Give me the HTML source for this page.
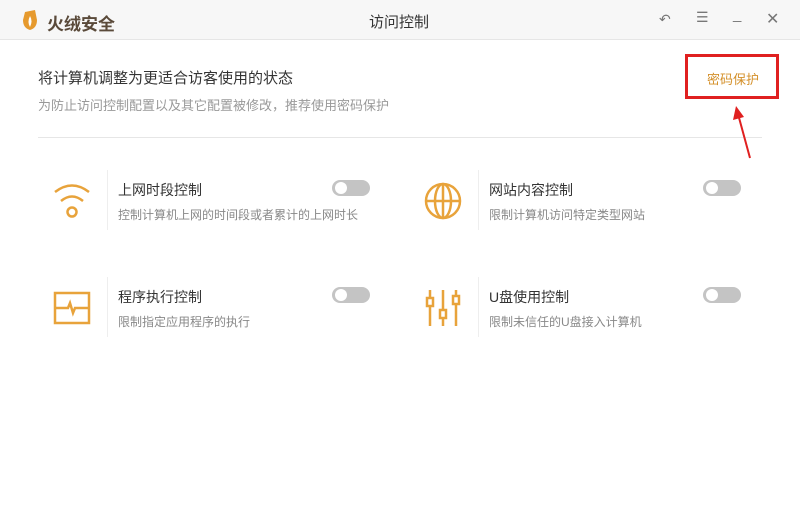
<!DOCTYPE html><html><head><meta charset="utf-8"><style>
*{margin:0;padding:0;box-sizing:border-box}
body{width:800px;height:526px;background:#fff;font-family:"Liberation Sans","Noto Sans CJK SC",sans-serif;position:relative;overflow:hidden}
.a{position:absolute;white-space:nowrap}
.tb{position:absolute;left:0;top:0;width:800px;height:40px;background:#f7f7f7;border-bottom:1px solid #e6e6e6}
.t{font-size:14px;color:#333}
.d{font-size:12px;color:#888}
.tg{position:absolute;width:38px;height:16px;border-radius:8px;background:#c4c4c4}
.tg:after{content:"";position:absolute;left:3px;top:2px;width:12px;height:12px;border-radius:6px;background:#fff}
.v{position:absolute;width:1px;height:60px;background:#eee}
</style></head><body>
<div class="tb"></div>
<svg class="a" style="left:22px;top:10px" width="16" height="20" viewBox="0 0 16 20"><path d="M3 2 L13 0 L15 10 Q15 18 8 20 Q1 18 1 10 Z" fill="#e69a2e"/><path d="M8 6 Q11 11 8 17 Q5 12 8 6Z" fill="#fff"/></svg>
<div class="a" style="left:47px;top:10px;font-size:17px;font-weight:bold;color:#5a4a3a">火绒安全</div>
<div class="a" style="left:369px;top:11px;font-size:15px;color:#333">访问控制</div>
<div class="a" style="left:659px;top:11px;font-size:14px;color:#777">↶</div>
<div class="a" style="left:696px;top:9px;font-size:14px;color:#777">☰</div>
<div class="a" style="left:733px;top:6px;font-size:15px;color:#777">_</div>
<div class="a" style="left:766px;top:9px;font-size:16px;color:#777">✕</div>
<div class="a" style="left:38px;top:67px;font-size:15px;color:#333">将计算机调整为更适合访客使用的状态</div>
<div class="a d" style="left:38px;top:95px;font-size:13px;color:#999">为防止访问控制配置以及其它配置被修改，推荐使用密码保护</div>
<div class="a" style="left:38px;top:137px;width:724px;height:1px;background:#e6e6e6"></div>
<div class="a" style="left:685px;top:54px;width:94px;height:45px;border:3px solid #e02020"></div>
<div class="a" style="left:707px;top:69px;font-size:13px;color:#d4902a">密码保护</div>
<svg class="a" style="left:728px;top:100px" width="26" height="60"><path d="M22 58 L10 14" stroke="#e02020" stroke-width="2"/><path d="M5 20 L8 6 L16 17Z" fill="#e02020"/></svg>
<div class="v" style="left:107px;top:170px"></div><div class="v" style="left:478px;top:170px"></div>
<div class="v" style="left:107px;top:277px"></div><div class="v" style="left:478px;top:277px"></div>
<svg class="a" style="left:52px;top:182px" width="40" height="40" fill="none" stroke="#e8a33b" stroke-width="2.5"><path d="M3 10 Q20 -3 37 10"/><path d="M9 19 Q20 10 31 19"/><circle cx="20" cy="30" r="4.5"/></svg>
<svg class="a" style="left:423px;top:181px" width="40" height="40" fill="none" stroke="#e8a33b" stroke-width="2.5"><circle cx="20" cy="20" r="17"/><ellipse cx="20" cy="20" rx="8" ry="17"/><path d="M3 20H37M20 3V37"/></svg>
<svg class="a" style="left:52px;top:290px" width="40" height="36" fill="none" stroke="#e8a33b" stroke-width="2.5"><rect x="3" y="3" width="34" height="30"/><path d="M3 18H16L18 13L21 23L23 18H37"/></svg>
<svg class="a" style="left:423px;top:288px" width="40" height="40" fill="none" stroke="#e8a33b" stroke-width="2.5"><path d="M7 2V38M20 2V38M33 2V38"/><rect x="4" y="10" width="6" height="8" fill="#fff"/><rect x="17" y="22" width="6" height="8" fill="#fff"/><rect x="30" y="8" width="6" height="8" fill="#fff"/></svg>
<div class="a t" style="left:118px;top:180px">上网时段控制</div>
<div class="a d" style="left:118px;top:206px">控制计算机上网的时间段或者累计的上网时长</div>
<div class="a t" style="left:489px;top:180px">网站内容控制</div>
<div class="a d" style="left:489px;top:206px">限制计算机访问特定类型网站</div>
<div class="a t" style="left:118px;top:287px">程序执行控制</div>
<div class="a d" style="left:118px;top:313px">限制指定应用程序的执行</div>
<div class="a t" style="left:489px;top:287px">U盘使用控制</div>
<div class="a d" style="left:489px;top:313px">限制未信任的U盘接入计算机</div>
<div class="tg" style="left:332px;top:180px"></div><div class="tg" style="left:703px;top:180px"></div>
<div class="tg" style="left:332px;top:287px"></div><div class="tg" style="left:703px;top:287px"></div>
</body></html>
